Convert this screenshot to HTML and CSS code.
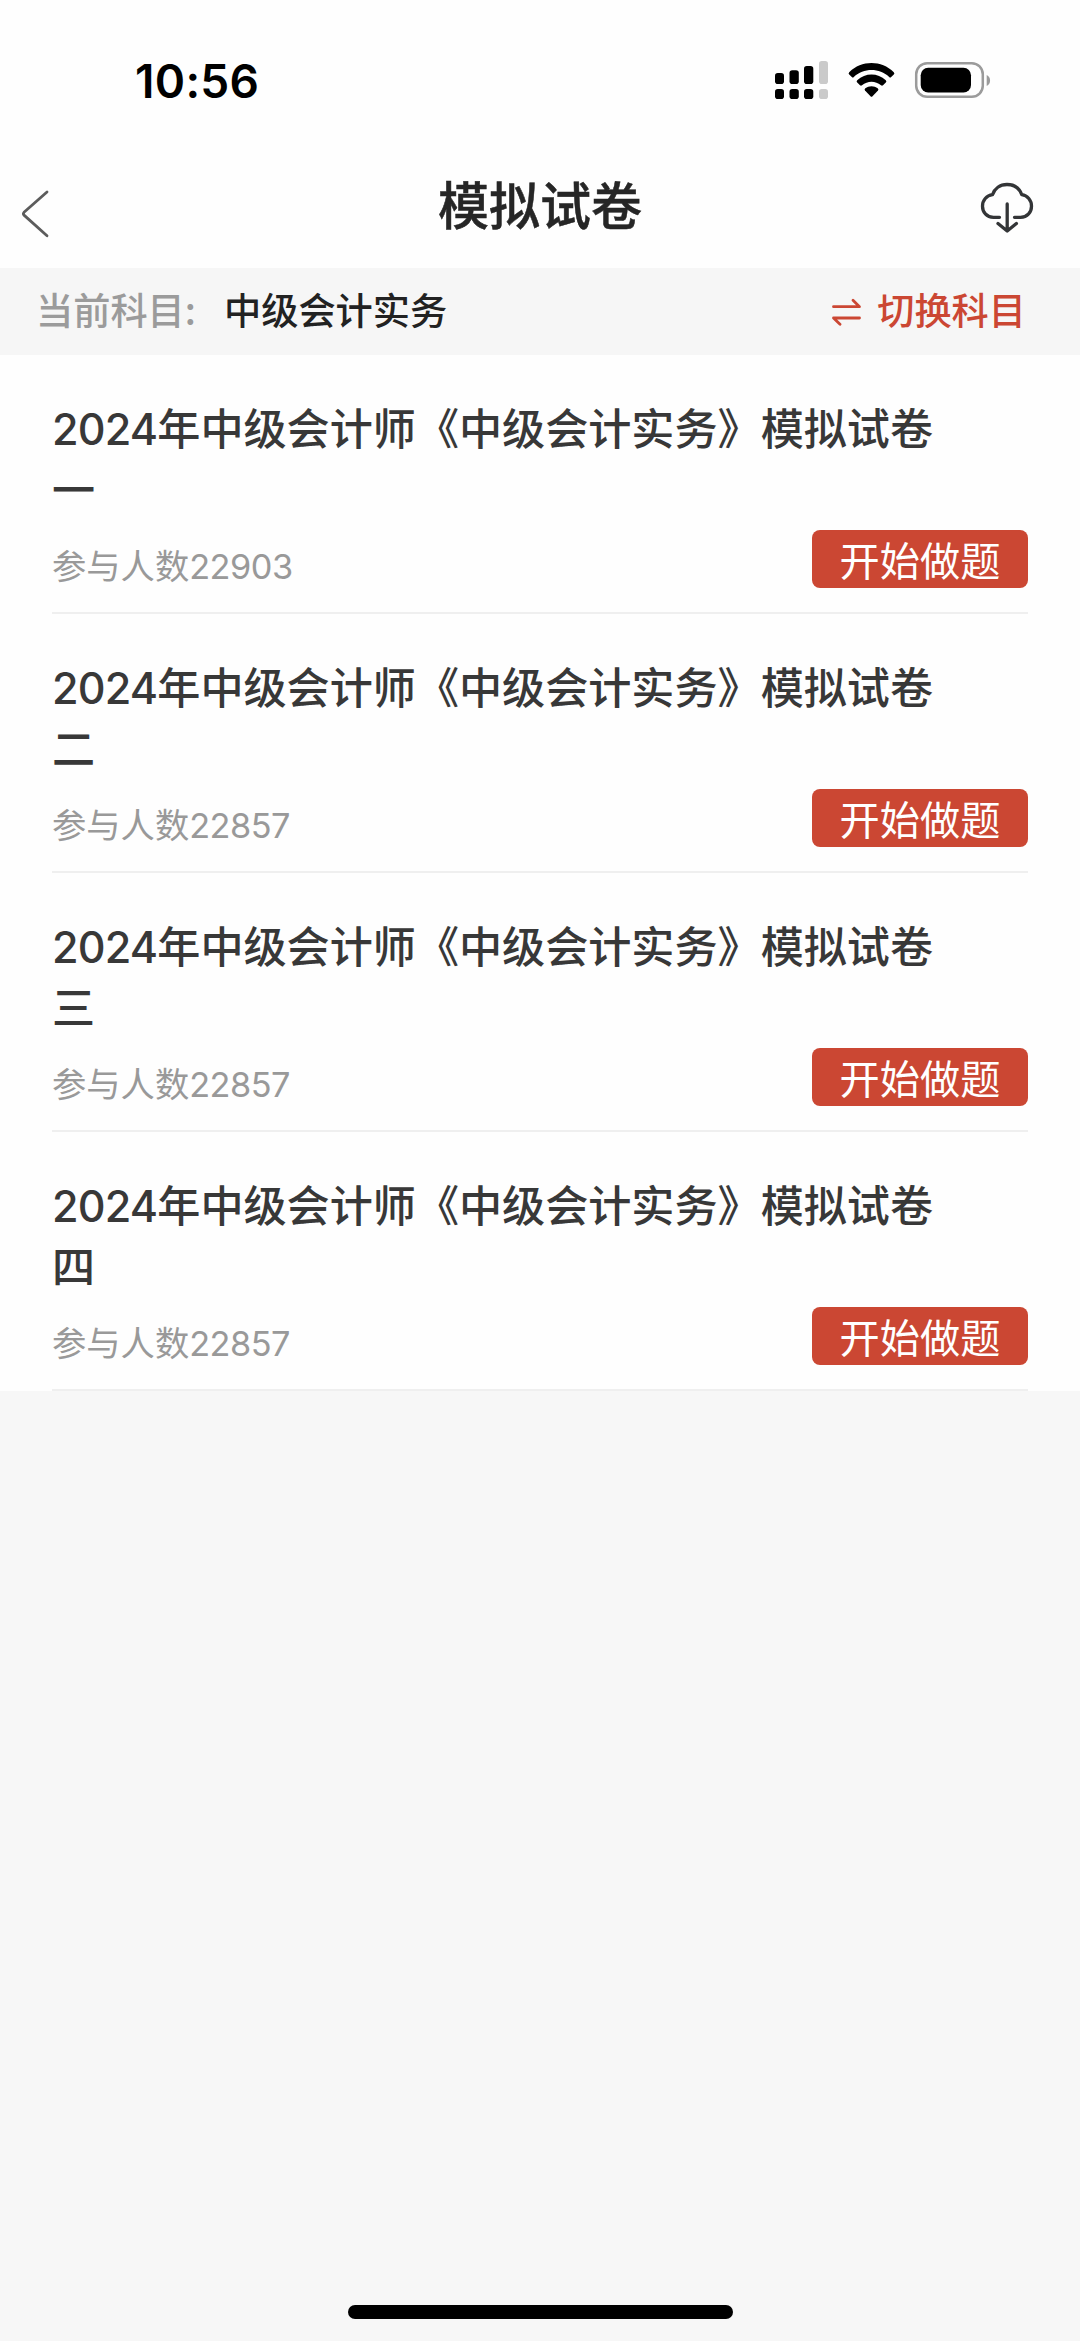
FILE: index.html
```html
<!DOCTYPE html>
<html lang="zh-CN">
<head>
<meta charset="utf-8">
<title>模拟试卷</title>
<link rel="stylesheet" href="styles.css">
</head>
<body>
<div class="screen">
  <header class="status">
    <span class="clock">10:56</span>
    <svg class="status-icons" width="220" height="44" viewBox="772 58 220 44">
      <g fill="#000">
        <rect x="775" y="73" width="9" height="11" rx="2.800"/>
        <rect x="789.5" y="70.300" width="9.300" height="13.700" rx="2.800"/>
        <rect x="804" y="66" width="9.300" height="18" rx="2.800"/>
        <rect x="775" y="89" width="9" height="10" rx="2.800"/>
        <rect x="789.5" y="89" width="9.300" height="10" rx="2.800"/>
        <rect x="804" y="89" width="9.300" height="10" rx="2.800"/>
      </g>
      <g fill="#cacaca">
        <rect x="819" y="61" width="9" height="23" rx="2.800"/>
        <rect x="819" y="89" width="9" height="10" rx="2.800"/>
      </g>
      <path d="M849.200 72.200C861.500 60 881.500 60 893.800 72.200Q895 73.400 893.800 74.500L891.200 77Q890.200 78 889.200 77C879.500 67.700 863.500 67.700 853.800 77Q852.800 78 851.800 77L849.200 74.500Q848 73.400 849.200 72.200Z"/>
      <path d="M857.200 80.300C865.300 72.700 877.700 72.700 885.800 80.300Q887 81.500 885.800 82.600L883 85.300Q882 86.200 881 85.300C875.400 80.600 867.600 80.600 862 85.300Q861 86.200 860 85.300L857.200 82.600Q856 81.500 857.200 80.300Z"/>
      <path d="M865.300 88.200C868.800 85.500 874.200 85.500 877.700 88.200Q879 89.400 878 90.500L872.500 96.200Q871.500 97.200 870.500 96.200L865 90.500Q864 89.400 865.300 88.200Z"/>
      <rect x="916.200" y="63.200" width="66.600" height="33.600" rx="11" fill="none" stroke="#9b9b9b" stroke-width="2.500"/>
      <rect x="920.700" y="67.800" width="50.300" height="24.700" rx="7.500"/>
      <path d="M986.700 75C991.200 77 991.200 84 986.700 86Z" fill="#9b9b9b"/>
    </svg>
  </header>
  <nav class="navbar">
    <svg class="back" width="30" height="52" viewBox="20 188 30 52" fill="none" stroke="#5c5c5c" stroke-width="2.800" stroke-linecap="round" stroke-linejoin="round"><path d="M47 192L24 212.300Q22.800 213.700 24 215.100L47 235.800"/></svg>
    <h1 class="heading">模拟试卷</h1>
    <svg class="download" width="56" height="54" viewBox="979 181 56 54" fill="none" stroke="#333537" stroke-width="3.300" stroke-linecap="round" stroke-linejoin="round">
      <path d="M999.500 217.300H993.500C986.500 217.300 982.500 212 982.500 206.200C982.500 200.300 986.500 195.500 992.500 194.700C994.500 188.500 1000 184.500 1007 184.500C1014 184.500 1019.500 188.500 1021.800 194.700C1027.500 195.500 1031.500 200.300 1031.500 206.200C1031.500 212 1027.500 217.300 1020.500 217.300H1014.500"/>
      <path d="M1007.200 204V230M998 223.500L1007.200 231L1016.400 223.500"/>
    </svg>
  </nav>
  <section class="subject">
    <span class="label">当前科目:</span>
    <span class="current">中级会计实务</span>
    <span class="switch">
      <svg class="swap" width="30" height="28" viewBox="831 297 30 28" fill="none" stroke="#cb4733" stroke-width="2.800" stroke-linecap="round" stroke-linejoin="round"><path d="M833.500 305.700H859.500L853 299.200"/><path d="M859.500 317H833.500L840 323.300"/></svg>
      <span class="switch-text">切换科目</span>
    </span>
  </section>
  <main class="list">
    <article class="paper">
      <h2 class="title"><span class="year">2024</span>年中级会计师《中级会计实务》模拟试卷一</h2>
      <div class="meta"><span class="count">参与人数<span class="num">22903</span></span><span class="start">开始做题</span></div>
    </article>
    <article class="paper">
      <h2 class="title"><span class="year">2024</span>年中级会计师《中级会计实务》模拟试卷二</h2>
      <div class="meta"><span class="count">参与人数<span class="num">22857</span></span><span class="start">开始做题</span></div>
    </article>
    <article class="paper">
      <h2 class="title"><span class="year">2024</span>年中级会计师《中级会计实务》模拟试卷三</h2>
      <div class="meta"><span class="count">参与人数<span class="num">22857</span></span><span class="start">开始做题</span></div>
    </article>
    <article class="paper">
      <h2 class="title"><span class="year">2024</span>年中级会计师《中级会计实务》模拟试卷四</h2>
      <div class="meta"><span class="count">参与人数<span class="num">22857</span></span><span class="start">开始做题</span></div>
    </article>
  </main>
  <footer class="home"><div class="home-bar"></div></footer>
</div>
</body>
</html>
```
FILE: styles.css
```css
* { box-sizing: border-box; }
body {
  margin: 0;
  background: #f7f7f7;
  font-family: "Noto Sans CJK SC", sans-serif;
}
.screen {
  width: 1080px;
  height: 2341px;
  display: flex;
  flex-direction: column;
  overflow: hidden;
}
.status {
  height: 160px;
  background: #fefefe;
  display: flex;
  justify-content: space-between;
  align-items: flex-start;
  padding: 58px 88px 0 135px;
}
.clock {
  font: 600 46px/46px Inter, sans-serif;
  letter-spacing: 0.3px;
  color: #000;
}
.navbar {
  height: 108px;
  background: #fefefe;
  display: grid;
  grid-template-columns: 140px 1fr 140px;
  align-items: start;
}
.back { margin: 28px 0 0 20px; }
.download { justify-self: end; margin: 21px 45px 0 0; }
.heading {
  margin: 13px 0 0;
  text-align: center;
  font-size: 51px;
  line-height: 60px;
  font-weight: 500;
  color: #262626;
  -webkit-text-stroke: 0.5px #262626;
}
.subject {
  height: 87px;
  display: flex;
  align-items: center;
  padding: 0 54px 5px 36px;
  font-size: 37.2px;
  line-height: 54px;
  background: #f6f6f6;
}
.label { width: 188px; color: #9b9b9b; font-weight: 500; }
.current { color: #222; font-weight: 500; }
.switch {
  margin-left: auto;
  display: flex;
  align-items: center;
  gap: 16px;
  color: #cb4733;
  font-weight: 500;
}
.swap { margin-top: 5px; }
.list { background: #fefefe; }
.paper {
  height: 259px;
  margin: 0 52px;
  padding-top: 41px;
  border-bottom: 2px solid #efefef;
}
.title {
  margin: 0;
  width: 890px;
  font-size: 43.100px;
  line-height: 61px;
  font-weight: 500;
  color: #383838;
}
.year, .num {
  font-family: Inter, sans-serif;
  line-height: 1;
}
.year { letter-spacing: -0.800px; }
.meta {
  display: flex;
  justify-content: space-between;
  align-items: flex-start;
  padding-top: 12px;
}
.count {
  font-size: 34.300px;
  line-height: 50px;
  margin-top: 9px;
  font-weight: 400;
  color: #999;
}
.num { font-weight: 400; letter-spacing: -0.500px; }
.start {
  width: 216px;
  height: 58px;
  border-radius: 8px;
  background: #cb4733;
  color: #fff;
  font-size: 40.200px;
  line-height: 57px;
  text-align: center;
}
.home {
  margin-top: auto;
  height: 36px;
  display: flex;
  justify-content: center;
}
.home-bar {
  width: 385px;
  height: 14px;
  border-radius: 7px;
  background: #000;
}
```
